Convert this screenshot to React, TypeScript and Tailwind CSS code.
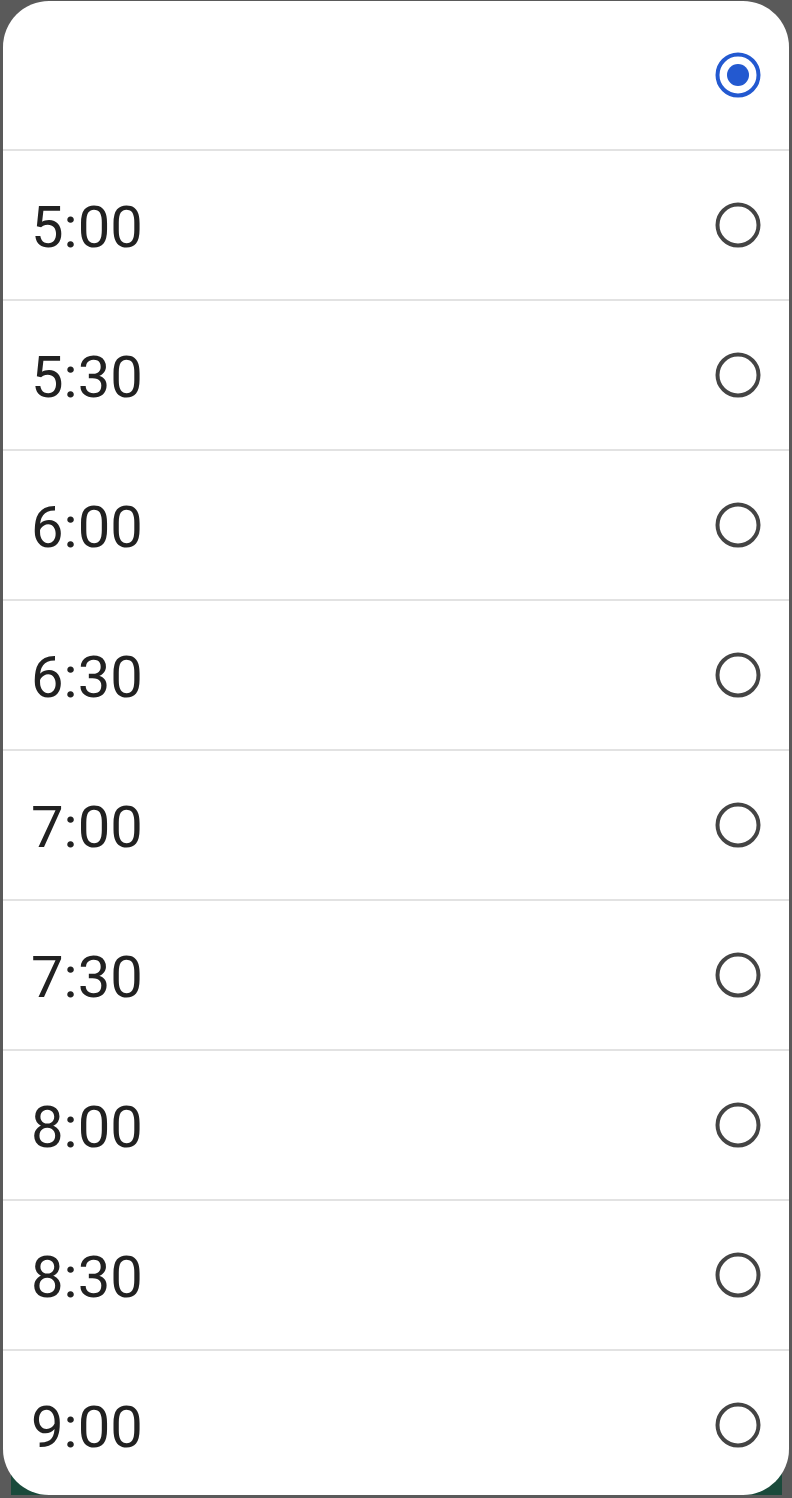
import React from 'react';

const times = ['5:00', '5:30', '6:00', '6:30', '7:00', '7:30', '8:00', '8:30', '9:00'];

const Radio = ({ checked }: { checked?: boolean }) => (
  <svg width="48" height="48" viewBox="0 0 48 48">
    <circle cx="24" cy="24" r="20.5" fill="none" stroke={checked ? '#2359d0' : '#444444'} strokeWidth="4" />
    {checked && <circle cx="24" cy="24" r="11" fill="#2359d0" />}
  </svg>
);

const Row = ({ label, checked }: { label?: string; checked?: boolean }) => (
  <div className="flex h-[148px] shrink-0 items-center justify-between pl-[28px] pr-[27px]">
    <span className="pt-[4px] text-[58px] leading-none text-[#212121]">{label}</span>
    <Radio checked={checked} />
  </div>
);

const App = () => {
  return (
    <div className="relative h-[1498px] w-[792px] overflow-hidden bg-[#5a5a5a]" style={{ fontFamily: 'Roboto, "Noto Sans", sans-serif' }}>
      <div className="absolute bottom-[3px] left-[11px] right-[10px] h-[60px] bg-[#1a4a3b]" />
      <div className="relative ml-[3px] mt-[1px] flex h-[1494px] w-[786px] flex-col overflow-hidden rounded-[46px] bg-white">
        <Row checked />
        {times.map(t => (
          <React.Fragment key={t}>
            <div className="h-[2px] shrink-0 bg-[#e2e2e2]" />
            <Row label={t} />
          </React.Fragment>
        ))}
      </div>
    </div>
  );
};

export default App;
